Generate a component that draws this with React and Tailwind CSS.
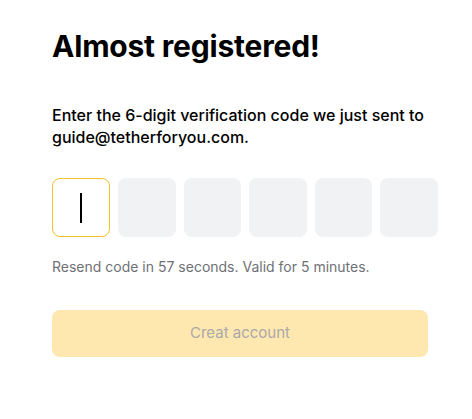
export default function App() {
  const boxes = [0, 1, 2, 3, 4, 5];
  return (
    <div className="w-[472px] h-[419px] bg-white overflow-hidden" style={{ fontFamily: "Inter, 'Noto Sans', sans-serif" }}>
      <div className="pl-[52px] pt-[27px] w-[428px]">
        <h1 className="text-[30px] leading-[38px] font-bold text-black tracking-[-0.2px]">Almost registered!</h1>
        <p className="mt-[39px] text-[16px] leading-[22px] font-medium text-black">
          Enter the 6-digit verification code we just sent to guide@tetherforyou.com.
        </p>
        <div className="mt-[30px] flex gap-[8px] w-[400px]">
          {boxes.map((i) =>
            i === 0 ? (
              <div key={i} className="w-[58px] h-[59px] shrink-0 rounded-[8px] border border-[#f5c12e] bg-white flex items-center justify-center">
                <div className="w-[1.5px] h-[30px] bg-black" />
              </div>
            ) : (
              <div key={i} className="w-[57.6px] h-[59px] shrink-0 rounded-[8px] bg-[#f1f2f4]" />
            )
          )}
        </div>
        <p className="mt-[20px] text-[14px] leading-[20px] text-[#6f7176]">Resend code in 57 seconds. Valid for 5 minutes.</p>
        <button className="mt-[33px] w-[376px] h-[47px] rounded-[8px] bg-[#ffe8b0] text-[15px] text-[#a9a9a9] flex items-center justify-center">
          Creat account
        </button>
      </div>
    </div>
  );
}
